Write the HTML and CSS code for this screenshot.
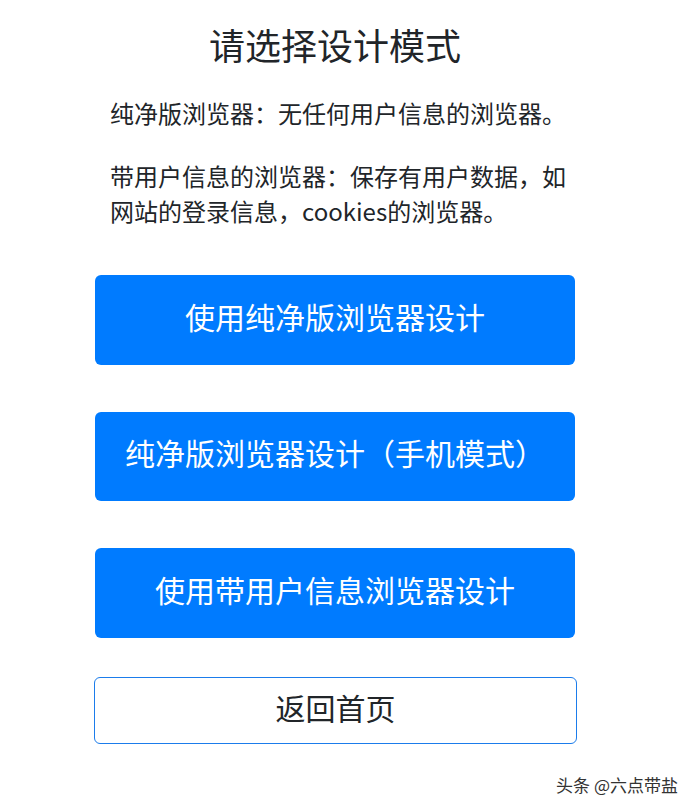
FILE: index.html
```html
<!DOCTYPE html>
<html lang="zh-CN">
<head>
<meta charset="utf-8">
<title>请选择设计模式</title>
<link rel="stylesheet" href="styles.css">
</head>
<body>
<main class="page">
  <h1 class="title">请选择设计模式</h1>
  <section class="intro">
    <p>纯净版浏览器：无任何用户信息的浏览器。</p>
    <p>带用户信息的浏览器：保存有用户数据，如网站的登录信息，cookies的浏览器。</p>
  </section>
  <nav class="actions">
    <button class="btn btn-primary">使用纯净版浏览器设计</button>
    <button class="btn btn-primary">纯净版浏览器设计（手机模式）</button>
    <button class="btn btn-primary">使用带用户信息浏览器设计</button>
    <button class="btn btn-outline">返回首页</button>
  </nav>
</main>
<div class="watermark">头条 @六点带盐</div>
</body>
</html>
```

FILE: styles.css
```css
html, body {
  margin: 0;
  padding: 0;
  background: #ffffff;
}

body {
  font-family: "Noto Sans CJK SC", "Noto Sans", sans-serif;
  color: #212529;
  position: relative;
  min-height: 808px;
}

.page {
  width: 480px;
  margin-left: 95px;
  padding-top: 23px;
}

.title {
  margin: 0;
  font-size: 36px;
  font-weight: 400;
  line-height: 43px;
  text-align: center;
  color: #212529;
}

.intro {
  margin-top: 29px;
  padding-left: 15px;
}

.intro p {
  margin: 0 0 28px;
  font-size: 24px;
  line-height: 35px;
}

.intro p:last-child {
  margin-bottom: 0;
}

.actions {
  display: flex;
  flex-direction: column;
  margin-top: 47px;
}

.btn {
  display: flex;
  align-items: center;
  justify-content: center;
  width: 480px;
  padding: 0 0 8px;
  font-family: "Noto Sans CJK SC", "Noto Sans", sans-serif;
  font-size: 30px;
  font-weight: 400;
  line-height: 1;
  border-radius: 6px;
  cursor: pointer;
}

.btn-primary {
  height: 89.5px;
  background: #007bff;
  color: #ffffff;
  border: none;
}

.btn-primary + .btn-primary {
  margin-top: 47px;
}

.btn-outline {
  width: 483px;
  height: 67px;
  margin-top: 39px;
  margin-left: -1px;
  padding-bottom: 6px;
  background: #ffffff;
  color: #212529;
  border: 1px solid #1b7ceb;
}

.watermark {
  position: absolute;
  right: 21px;
  top: 775px;
  font-size: 17px;
  line-height: 20px;
  color: #333333;
  text-shadow: 0 0 2px #ffffff;
}
```
